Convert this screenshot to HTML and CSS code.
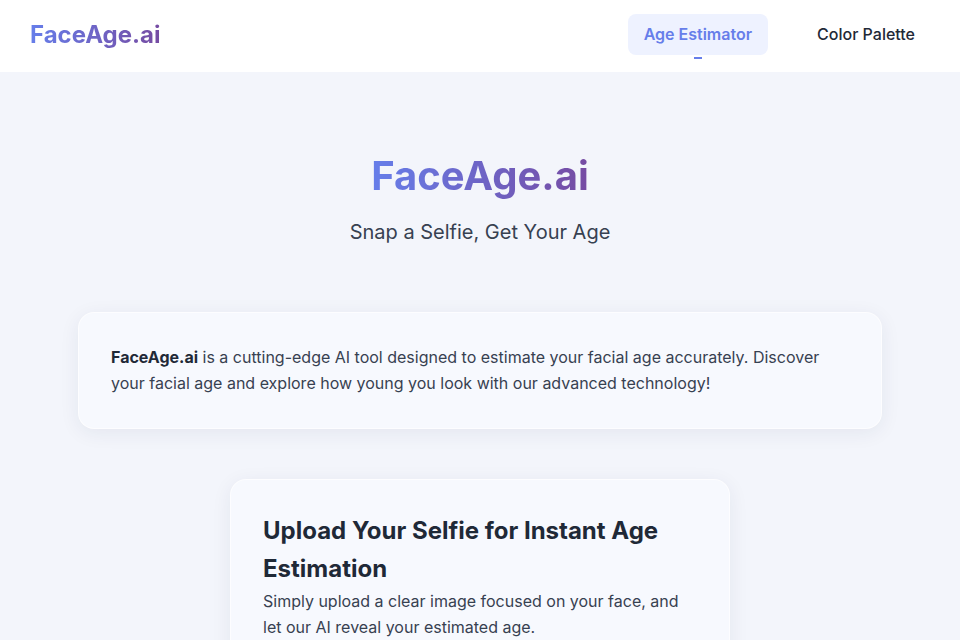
FILE: index.html
```html
<html>
    <head>
        <meta charset="utf-8">
        <title>FaceAge.ai</title>
        <link rel="stylesheet" href="styles.css">
    </head>
    <body>
        <div class="header">
            <div class="logo">FaceAge.ai</div>
            <div class="nav">
                <a class="nav-item active" href="#">Age Estimator</a>
                <a class="nav-item" href="#">Color Palette</a>
            </div>
        </div>

        <div class="main">
            <div class="hero">
                <h1>FaceAge.ai</h1>
                <p>Snap a Selfie, Get Your Age</p>
            </div>

            <div class="card intro">
                <p><b>FaceAge.ai</b> is a cutting-edge AI tool designed to estimate your facial age accurately. Discover your facial age and explore how young you look with our advanced technology!</p>
            </div>

            <div class="card upload">
                <h2>Upload Your Selfie for Instant Age Estimation</h2>
                <p>Simply upload a clear image focused on your face, and let our AI reveal your estimated age.</p>
            </div>
        </div>
    </body>
</html>
```

FILE: styles.css
```css
body {
    margin: 0;
    font-family: Inter, "Noto Sans", sans-serif;
    background: #f3f5fb;
    color: #374151;
}
.header {
    height: 68px;
    background: #ffffff;
    display: flex;
    align-items: center;
    justify-content: space-between;
    padding: 0 29px 4px 30px;
}
.logo {
    font-size: 24px;
    font-weight: 700;
    background: linear-gradient(90deg, #667eea, #764ba2);
    -webkit-background-clip: text;
    background-clip: text;
    color: transparent;
}
.nav {
    display: flex;
    gap: 33px;
}
.nav-item {
    position: relative;
    text-decoration: none;
    font-size: 16px;
    font-weight: 500;
    line-height: 21px;
    padding: 10px 16px;
    border-radius: 8px;
    color: #1f2937;
}
.nav-item.active {
    background: #eef2ff;
    color: #667eea;
    font-weight: 600;
}
.nav-item.active::after {
    content: "";
    position: absolute;
    left: 66px;
    bottom: -4px;
    width: 8px;
    height: 2px;
    background: #667eea;
}
.main {
    padding: 80px 0 0;
}
.hero {
    text-align: center;
}
.hero h1 {
    margin: 0;
    font-size: 40px;
    line-height: 48px;
    font-weight: 700;
    display: inline-block;
    background: linear-gradient(90deg, #667eea, #764ba2);
    -webkit-background-clip: text;
    background-clip: text;
    color: transparent;
}
.hero p {
    margin: 18px 0 0;
    font-size: 20px;
    line-height: 28px;
    color: #374151;
}
.card {
    background: #f7f9fe;
    border: 1px solid rgba(255, 255, 255, 0.7);
    border-radius: 16px;
    box-shadow: 0 4px 20px rgba(31, 41, 80, 0.07);
    margin: 0 auto;
    box-sizing: border-box;
}
.intro {
    width: 804px;
    margin-top: 66px;
    padding: 31px 32px 32px;
}
.intro p {
    margin: 0;
    font-size: 16px;
    line-height: 26px;
}
.intro b {
    color: #1f2937;
}
.upload {
    width: 500px;
    margin-top: 50px;
    padding: 32px 32px;
}
.upload h2 {
    margin: 0;
    font-size: 24px;
    line-height: 38px;
    font-weight: 700;
    color: #1f2937;
}
.upload p {
    margin: 0;
    font-size: 16px;
    line-height: 26px;
}
```
